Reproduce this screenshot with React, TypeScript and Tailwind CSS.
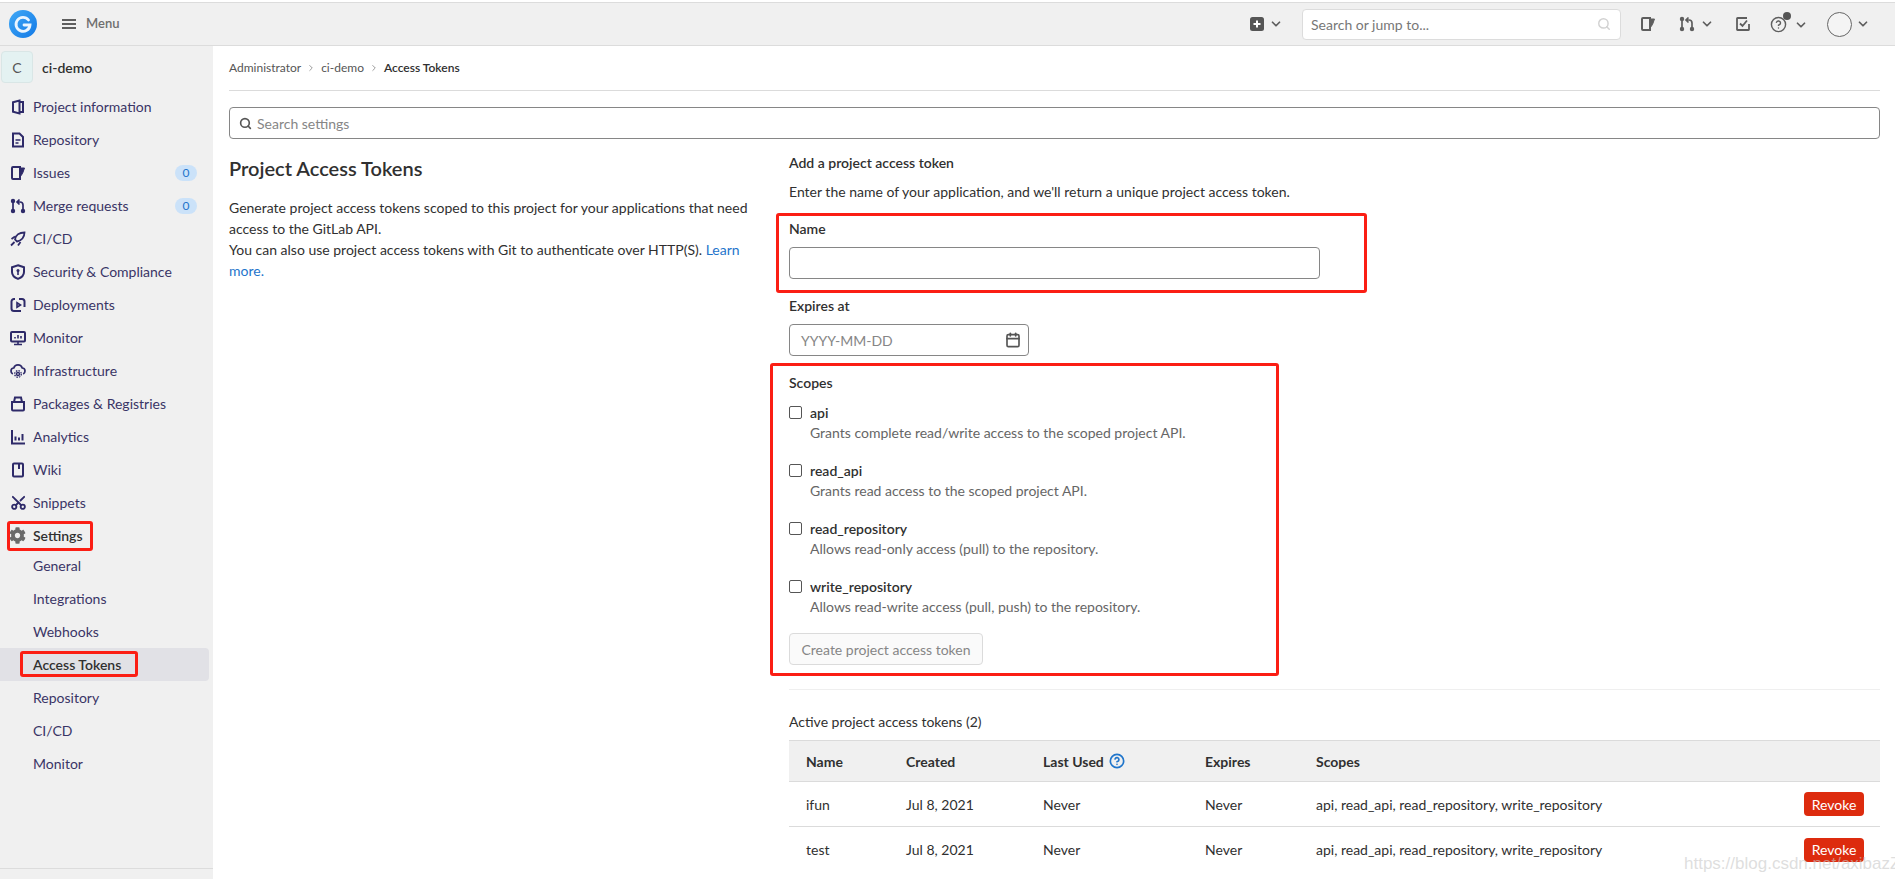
import { ReactNode } from "react";
import { ChevronDown, ChevronRight, Search, CircleHelp, Calendar, Scissors } from "lucide-react";
import { FaCog } from "react-icons/fa";

const font = { fontFamily: 'Lato, "Open Sans", sans-serif' };

const Ico = ({ children, size = 16, className = "" }: { children: ReactNode; size?: number; className?: string }) => (
  <svg width={size} height={size} viewBox="0 0 16 16" fill="none" stroke="currentColor" strokeWidth="2" className={`shrink-0 ${className}`}>
    {children}
  </svg>
);

const IssuesIcon = ({ className = "" }: { className?: string }) => (
  <Ico className={className}>
    <path d="M10 2H3a1 1 0 0 0-1 1v10a1 1 0 0 0 1 1h7z" />
    <path d="M10 3h4.500L12.500 8.500 10 12z" fill="currentColor" strokeWidth="1" />
  </Ico>
);

const MergeIcon = ({ className = "" }: { className?: string }) => (
  <Ico className={className}>
    <circle cx="3" cy="3" r="1.200" fill="currentColor" />
    <circle cx="3" cy="13" r="1.200" fill="currentColor" />
    <circle cx="13" cy="13" r="1.200" fill="currentColor" />
    <path d="M3 4v8M13 12V7a3 3 0 0 0-3-3H8M9.500 1.500 7 4l2.500 2.500" strokeWidth="1.700" />
  </Ico>
);

const navItems: { label: string; icon: ReactNode; badge?: boolean }[] = [
  {
    label: "Project information",
    icon: (
      <Ico>
        <path d="M3 3.200 9.500 1.500v13L3 12.800zM9.500 3H13v10H9.500" />
      </Ico>
    ),
  },
  {
    label: "Repository",
    icon: (
      <Ico>
        <path d="M3 1.500h6.500L13 5v9.500H3z" />
        <path d="M5.500 8h5M5.500 11h3" strokeWidth="1.600" />
      </Ico>
    ),
  },
  { label: "Issues", icon: <IssuesIcon />, badge: true },
  { label: "Merge requests", icon: <MergeIcon />, badge: true },
  {
    label: "CI/CD",
    icon: (
      <Ico>
        <path d="M14.500 1.500c-5 0-9 2.500-9.500 7l2 2c4.500-.5 7.500-4.500 7.500-9z" strokeWidth="1.800" />
        <path d="M5 5.500 1.500 8M10.500 11 8 14.500M1 14.500l3.500-3.500" strokeWidth="1.800" />
      </Ico>
    ),
  },
  {
    label: "Security & Compliance",
    icon: (
      <Ico>
        <path d="M8 1.300 14 3.200V8c0 3.400-2.600 5.600-6 6.900C4.600 13.600 2 11.400 2 8V3.200z" />
        <circle cx="8" cy="6.500" r="1.500" fill="currentColor" stroke="none" />
        <path d="M8 7v4" strokeWidth="1.600" />
      </Ico>
    ),
  },
  {
    label: "Deployments",
    icon: (
      <Ico>
        <path d="M5 2H4a2.500 2.500 0 0 0-2.500 2.500v7A2.500 2.500 0 0 0 4 14h7" />
        <path d="M9 2h3a2.500 2.500 0 0 1 2.500 2.500V10" />
        <path d="M7 5.800 10.500 8 7 10.200z" strokeWidth="1.600" />
      </Ico>
    ),
  },
  {
    label: "Monitor",
    icon: (
      <Ico>
        <rect x="1" y="2" width="14" height="9.500" rx="1" />
        <path d="M8 11.500v3M4 14.500h8M5 8.500V7M8 8.500V5M11 8.500V6" strokeWidth="1.600" />
      </Ico>
    ),
  },
  {
    label: "Infrastructure",
    icon: (
      <Ico>
        <path d="M2.800 11A3.300 3.300 0 0 1 1 8a3 3 0 0 1 2.800-3 4.400 4.400 0 0 1 8.400 0A3 3 0 0 1 15 8a3.300 3.300 0 0 1-1.800 3" strokeWidth="1.700" />
        <circle cx="8" cy="11" r="2.200" fill="currentColor" stroke="none" />
        <circle cx="8" cy="11" r="3.300" strokeWidth="1.300" strokeDasharray="1.500 1.100" />
        <circle cx="8" cy="11" r=".8" fill="#f0f0f0" stroke="none" />
      </Ico>
    ),
  },
  {
    label: "Packages & Registries",
    icon: (
      <Ico>
        <path d="M2 6h12v7.500a1 1 0 0 1-1 1H3a1 1 0 0 1-1-1zM4 6l1-4.500h6L12 6" />
      </Ico>
    ),
  },
  {
    label: "Analytics",
    icon: (
      <Ico>
        <path d="M2 1v13.500h13M5.500 7.500v4M9 8.500v3M12.500 5v6.500" />
      </Ico>
    ),
  },
  {
    label: "Wiki",
    icon: (
      <Ico>
        <rect x="3" y="1.500" width="10" height="13" rx="1" />
        <path d="M9 2v5" />
      </Ico>
    ),
  },
  {
    label: "Snippets",
    icon: <Scissors size={17} strokeWidth={2.600} className="shrink-0 -rotate-90" />,
  },
];

const subItems = ["General", "Integrations", "Webhooks", "Access Tokens", "Repository", "CI/CD", "Monitor"];

const scopes = [
  { name: "api", desc: "Grants complete read/write access to the scoped project API." },
  { name: "read_api", desc: "Grants read access to the scoped project API." },
  { name: "read_repository", desc: "Allows read-only access (pull) to the repository." },
  { name: "write_repository", desc: "Allows read-write access (pull, push) to the repository." },
];

const tokens = ["ifun", "test"];

function TopBar() {
  return (
    <header className="h-[44px] shrink-0 mt-[2px] flex items-center bg-[#f0f0f0] border-t border-b border-[#dcdcdc] text-[#5e5e5e]">
      <svg width="28" height="28" viewBox="0 0 28 28" className="ml-[9px] shrink-0">
        <defs>
          <linearGradient id="logoBlue" x1="0" y1="0" x2="1" y2="1">
            <stop offset="0" stopColor="#41a9f6" />
            <stop offset="1" stopColor="#1279e6" />
          </linearGradient>
        </defs>
        <circle cx="14" cy="14" r="14" fill="url(#logoBlue)" />
        <path d="M19.500 10A7 7 0 1 0 21 15h-6" fill="none" stroke="#eaf5ff" strokeWidth="2.800" strokeLinecap="round" />
      </svg>
      <svg width="14" height="10" viewBox="0 0 14 10" className="ml-[25px] shrink-0" fill="none" stroke="currentColor" strokeWidth="2">
        <path d="M0 1h14M0 5h14M0 9h14" />
      </svg>
      <span className="ml-[10px] text-[13px] font-semibold text-[#6e6e6e]">Menu</span>
      <div className="ml-auto flex items-center">
        <svg width="14" height="14" viewBox="0 0 14 14">
          <rect width="14" height="14" rx="2.500" fill="#555" />
          <path d="M7 3.500v7M3.500 7h7" stroke="#fff" strokeWidth="2" />
        </svg>
        <ChevronDown size={14} strokeWidth={3} className="ml-[5px]" />
        <div className="ml-[19px] w-[319px] h-[31px] bg-white border border-[#dcdcdc] rounded flex items-center pl-[8px] pr-[9px] text-[14px] text-[#777]">
          <span>Search or jump to...</span>
          <Search size={14} strokeWidth={2.500} className="ml-auto text-[#d2d2d2]" />
        </div>
        <IssuesIcon className="ml-[19px]" />
        <MergeIcon className="ml-[23px]" />
        <ChevronDown size={14} strokeWidth={3} className="ml-[5px]" />
        <svg width="14" height="14" viewBox="0 0 14 14" fill="none" stroke="currentColor" strokeWidth="1.800" className="ml-[22px]">
          <path d="M13 7v5.500a.500.500 0 0 1-.500.500h-11a.500.500 0 0 1-.500-.500v-11a.500.500 0 0 1 .500-.500H11M4 6.500 6.500 9 11 3.500" />
        </svg>
        <div className="relative ml-[20px] flex items-center">
          <CircleHelp size={17} strokeWidth={2} />
          <span className="absolute -top-[4px] left-[13px] w-[8px] h-[8px] rounded-full bg-[#555]" />
          <ChevronDown size={14} strokeWidth={3} className="ml-[7px] mt-[1px]" />
        </div>
        <div className="ml-[19px] w-[25px] h-[25px] rounded-full border border-[#666] bg-[#f4f4f4]" />
        <ChevronDown size={14} strokeWidth={3} className="ml-[4px] mr-[25px]" />
      </div>
    </header>
  );
}

function Sidebar() {
  return (
    <aside className="w-[213px] shrink-0 bg-[#f0f0f0] flex flex-col text-[14px]">
      <div className="flex items-center h-[32px] mt-[5px] ml-[1px]">
        <div className="w-[32px] h-[32px] rounded border border-[#d9e6e6] bg-[#e4f2f2] flex items-center justify-center text-[#555]">C</div>
        <span className="ml-[9px] font-semibold text-[#303030]">ci-demo</span>
      </div>
      <nav className="mt-[7px] flex flex-col">
        {navItems.map((item) => (
          <div key={item.label} className="h-[33px] flex items-center pl-[10px] pr-[16px]">
            <span className="w-[16px] flex justify-center text-[#2e2a69]">{item.icon}</span>
            <span className="ml-[7px] text-[#3a3566]">{item.label}</span>
            {item.badge && (
              <span className="ml-auto w-[22px] h-[16px] rounded-full bg-[#cbe2f9] text-[#1f75cb] text-[12px] leading-[16px] text-center">0</span>
            )}
          </div>
        ))}
        <div className="h-[33px] flex items-center pl-[9px]">
          <FaCog size={17} className="text-[#6a6a6a] shrink-0" />
          <span className="ml-[7px] font-semibold text-[#303030]">Settings</span>
        </div>
        <div className="mt-[-3px] flex flex-col">
          {subItems.map((s) => (
            <div
              key={s}
              className={
                s === "Access Tokens"
                  ? "h-[33px] flex items-center pl-[33px] mr-[4px] bg-[#e1e1e6] rounded-r text-[#303030] font-semibold"
                  : "h-[33px] flex items-center pl-[33px] text-[#3a3566]"
              }
            >
              {s}
            </div>
          ))}
        </div>
      </nav>
      <div className="mt-auto mb-[10px] border-t border-[#dcdcdc]" />
    </aside>
  );
}

function Main() {
  return (
    <main className="flex-1 min-w-0 bg-white pl-[16px] pr-[15px] text-[14px] text-[#303030]">
      <div className="h-[45px] flex items-center border-b border-[#dbdbdb] text-[12px] text-[#555]">
        <span>Administrator</span>
        <ChevronRight size={10} className="mx-[5px] text-[#888]" />
        <span>ci-demo</span>
        <ChevronRight size={10} className="mx-[5px] text-[#888]" />
        <span className="font-semibold text-[#303030]">Access Tokens</span>
      </div>
      <div className="mt-[16px] h-[32px] border border-[#868686] rounded flex items-center pl-[9px] text-[#868686]">
        <Search size={13} strokeWidth={3} className="text-[#555]" />
        <span className="ml-[5px]">Search settings</span>
      </div>
      <div className="flex mt-[14px]">
        <section className="w-[560px] shrink-0 pr-[20px]">
          <h2 className="text-[20px] leading-[26px] mt-[2px] font-semibold">Project Access Tokens</h2>
          <p className="mt-[16px] leading-[21px]">
            Generate project access tokens scoped to this project for your applications that need access to the GitLab API.
            <br />
            You can also use project access tokens with Git to authenticate over HTTP(S).{" "}
            <span className="text-[#1f75cb]">Learn more.</span>
          </p>
        </section>
        <section className="flex-1 min-w-0">
          <h3 className="font-semibold leading-[20px]">Add a project access token</h3>
          <p className="mt-[9px] leading-[20px]">Enter the name of your application, and we'll return a unique project access token.</p>
          <label className="block mt-[17px] font-semibold leading-[20px]">Name</label>
          <div className="mt-[8px] w-[531px] h-[32px] border border-[#868686] rounded" />
          <label className="block mt-[17px] font-semibold leading-[20px]">Expires at</label>
          <div className="mt-[8px] w-[240px] h-[32px] border border-[#868686] rounded flex items-center pl-[11px] pr-[7px] text-[#868686]">
            <span>YYYY-MM-DD</span>
            <Calendar size={16} strokeWidth={2.500} className="ml-auto text-[#555]" />
          </div>
          <label className="block mt-[17px] font-semibold leading-[20px]">Scopes</label>
          <div className="mt-[10px] flex flex-col gap-[18px]">
            {scopes.map((s) => (
              <div key={s.name} className="flex">
                <span className="mt-[3px] w-[13px] h-[13px] border border-[#555] rounded-[2px] bg-white shrink-0" />
                <div className="ml-[8px]">
                  <div className="font-semibold leading-[20px]">{s.name}</div>
                  <div className="leading-[20px] text-[#666]">{s.desc}</div>
                </div>
              </div>
            ))}
          </div>
          <div className="mt-[16px] w-[194px] h-[32px] border border-[#dbdbdb] rounded bg-[#fafafa] flex items-center justify-center text-[#868686]">
            Create project access token
          </div>
          <div className="mt-[24px] border-t border-[#efefef]" />
          <h5 className="mt-[22px] leading-[20px]">Active project access tokens (2)</h5>
          <div className="mt-[8px] border-t border-[#dbdbdb]">
            <div className="h-[41px] bg-[#f0f0f0] border-b border-[#dbdbdb] grid grid-cols-[100px_137px_162px_111px_1fr] items-center pl-[17px] font-bold">
              <span>Name</span>
              <span>Created</span>
              <span className="flex items-center gap-[5px]">
                Last Used
                <CircleHelp size={16} strokeWidth={2.500} className="text-[#1f75cb]" />
              </span>
              <span>Expires</span>
              <span>Scopes</span>
            </div>
            {tokens.map((t, i) => (
              <div
                key={t}
                className={
                  i === 0
                    ? "h-[45px] border-b border-[#dbdbdb] grid grid-cols-[100px_137px_162px_111px_1fr_76px] items-center pl-[17px]"
                    : "h-[45px] grid grid-cols-[100px_137px_162px_111px_1fr_76px] items-center pl-[17px]"
                }
              >
                <span>{t}</span>
                <span>Jul 8, 2021</span>
                <span>Never</span>
                <span>Never</span>
                <span>api, read_api, read_repository, write_repository</span>
                <span className="w-[60px] h-[24px] rounded bg-[#dd2b0e] text-white flex items-center justify-center">Revoke</span>
              </div>
            ))}
          </div>
        </section>
      </div>
    </main>
  );
}

export default function App() {
  return (
    <div className="relative h-screen overflow-hidden flex flex-col bg-white" style={font}>
      <TopBar />
      <div className="flex flex-1 min-h-0">
        <Sidebar />
        <Main />
      </div>
      {/* red annotation boxes drawn over the screenshot */}
      <div className="absolute left-[7px] top-[521px] w-[86px] h-[30px] border-[3px] border-[#fb1e14] rounded-[3px]" />
      <div className="absolute left-[20px] top-[651px] w-[118px] h-[26px] border-[3px] border-[#fb1e14] rounded-[3px]" />
      <div className="absolute left-[776px] top-[213px] w-[591px] h-[80px] border-[3px] border-[#fb1e14] rounded-[3px]" />
      <div className="absolute left-[770px] top-[363px] w-[509px] h-[313px] border-[3px] border-[#fb1e14] rounded-[3px]" />
      <span className="absolute left-[1684px] top-[851px] text-[17px] text-[#c8c8c8]/60" style={{ fontFamily: '"Liberation Sans", sans-serif' }}>
        https://blog.csdn.net/axibazZ
      </span>
    </div>
  );
}
